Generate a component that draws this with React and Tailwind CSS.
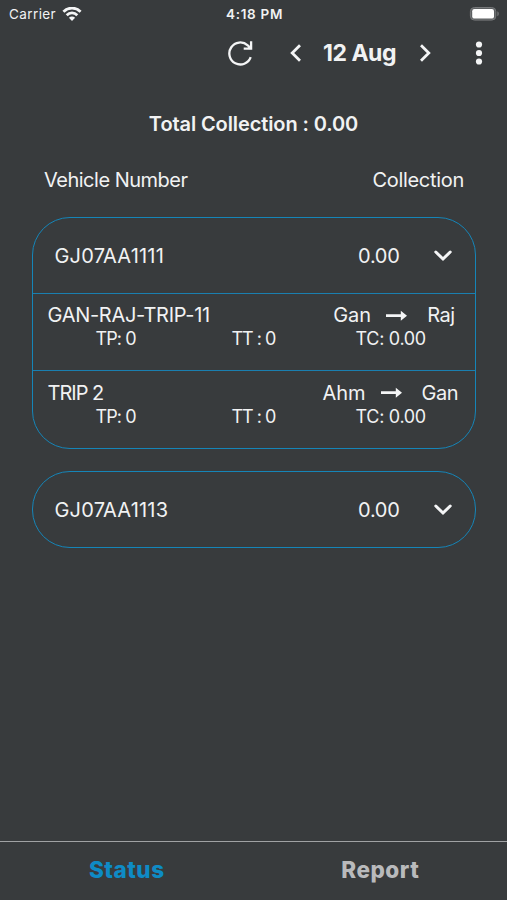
import { useState } from "react";
import clsx from "clsx";

const vehicles = [
  {
    number: "GJ07AA1111",
    collection: "0.00",
    trips: [
      {
        name: "GAN-RAJ-TRIP-11",
        from: "Gan",
        to: "Raj",
        tp: 0,
        tt: 0,
        tc: "0.00",
        inset: "pr-[20px]",
        tracking: "tracking-[-0.3px]",
      },
      {
        name: "TRIP 2",
        from: "Ahm",
        to: "Gan",
        tp: 0,
        tt: 0,
        tc: "0.00",
        inset: "pr-[16.5px]",
        tracking: "tracking-[-1px]",
      },
    ],
  },
  { number: "GJ07AA1113", collection: "0.00", trips: [] },
];

function WifiIcon() {
  return (
    <svg width="20" height="15" viewBox="0 0 20 15" fill="none" stroke="#f4f5f6" strokeWidth="2.8">
      <path d="M1.4 4.700C6.400-.1 13.600-.1 18.600 4.700" />
      <path d="M4.700 8.200c3-3 7.600-3 10.600 0" />
      <path d="M10 13.900 6.900 10.800c1.700-1.700 4.500-1.700 6.200 0z" fill="#f4f5f6" stroke="none" />
    </svg>
  );
}

function BatteryIcon() {
  return (
    <svg width="31" height="15" viewBox="0 0 31 15">
      <rect x="1.400" y=".5" width="25.400" height="12.600" rx="4" fill="#5c5f61" stroke="#77797b" strokeWidth="1" />
      <rect x="3.200" y="2" width="21.800" height="9.600" rx="2.200" fill="#fff" />
      <path d="M28.400 4.300v5c1.800-.8 1.800-4.200 0-5z" fill="#77797b" />
    </svg>
  );
}

function ReloadIcon() {
  return (
    <svg width="26" height="26" viewBox="0 0 26 26" fill="none" stroke="#f4f5f6" strokeWidth="2.300">
      <path d="M23.700 17.200A11 11 0 1 1 20.700 5.300L23.800 8.600" />
      <path d="M24.100 1.300V8.700H16.700" />
      <path d="M24 4.500V9h-4.500z" fill="#f4f5f6" stroke="none" />
    </svg>
  );
}

function Chevron({ d }) {
  return (
    <svg width="12" height="18" viewBox="0 0 12 18" fill="none" stroke="#f4f5f6" strokeWidth="2.800">
      <path d={d} />
    </svg>
  );
}

function ChevronDown() {
  return (
    <svg width="18" height="12" viewBox="0 0 18 12" fill="none" stroke="#f4f5f6" strokeWidth="3">
      <path d="m1.800 2 7.200 7 7.200-7" strokeLinecap="round" />
    </svg>
  );
}

function Arrow() {
  return (
    <svg width="21" height="12" viewBox="0 0 21 12" fill="#f4f5f6">
      <path d="M0 4.300H14.800V.7L21 5.700 14.800 10.700V7.100H0z" />
    </svg>
  );
}

function Trip({ trip }) {
  return (
    <div className="h-[77.5px] border-t border-[#1a7fb0] pt-[10px]">
      <div className={clsx("flex h-[24.5px] items-center pl-[15px] text-[20px] leading-[25px]", trip.inset)}>
        <span className={clsx("flex-1", trip.tracking)}>{trip.name}</span>
        <span className="mr-[15px]">{trip.from}</span>
        <Arrow />
        <span className="ml-[20px] tracking-[-0.5px]">{trip.to}</span>
      </div>
      <div className="flex pl-[63px] text-[18px] leading-[22px]">
        <span className="w-[136px] tracking-[-0.9px]">TP: {trip.tp}</span>
        <span className="w-[124px] tracking-[-1px]">TT : {trip.tt}</span>
        <span className="tracking-[-0.3px]">TC: {trip.tc}</span>
      </div>
    </div>
  );
}

function VehicleCard({ vehicle }) {
  return (
    <section className="mx-[31.5px] mb-[22.5px] overflow-hidden rounded-[38px] border border-[#1585b8]">
      <div className="flex h-[75px] items-center pt-[1px] pr-[23px] pl-[22px] text-[20px]">
        <span className="flex-1 tracking-[0.2px]">{vehicle.number}</span>
        <span className="mr-[34px] tracking-[-0.3px]">{vehicle.collection}</span>
        <ChevronDown />
      </div>
      {vehicle.trips.map((trip) => (
        <Trip key={trip.name} trip={trip} />
      ))}
    </section>
  );
}

export default function App() {
  const [tab, setTab] = useState("Status");

  return (
    <div className="flex h-[900px] w-full flex-col overflow-hidden bg-[#383b3d] font-['Inter',sans-serif] text-[#f1f2f3]">
      <header className="grid h-[28px] grid-cols-3 items-center pr-[7px] pl-[9px] text-[13.5px]">
        <div className="flex items-center gap-[6px]">
          <span className="tracking-[0.4px]">Carrier</span>
          <WifiIcon />
        </div>
        <span className="text-center font-semibold tracking-[0.7px]">4:18 PM</span>
        <div className="flex justify-end">
          <BatteryIcon />
        </div>
      </header>

      <nav className="flex h-[50px] items-center pl-[227px]">
        <button type="button" aria-label="Reload">
          <ReloadIcon />
        </button>
        <button type="button" aria-label="Previous day" className="ml-[36.5px]">
          <Chevron d="M10 1.200 2.200 9 10 16.800" />
        </button>
        <h1 className="ml-[20px] w-[76px] text-center text-[23px] font-bold tracking-[-0.5px] whitespace-nowrap">12 Aug</h1>
        <button type="button" aria-label="Next day" className="ml-[21px]">
          <Chevron d="M2 1.200 9.800 9 2 16.800" />
        </button>
        <button type="button" aria-label="Menu" className="ml-[44.500px]">
          <svg width="8" height="24" viewBox="0 0 8 24" fill="#f4f5f6">
            <circle cx="4" cy="3.500" r="3.100" />
            <circle cx="4" cy="12" r="3.100" />
            <circle cx="4" cy="20.500" r="3.100" />
          </svg>
        </button>
      </nav>

      <main className="flex-1">
        <h2 className="pt-[33px] text-center text-[20px] leading-[26px] font-semibold tracking-[-0.1px]">
          Total Collection : 0.00
        </h2>
        <div className="mt-[30px] mb-[23.5px] flex justify-between pr-[43px] pl-[44px] text-[20px] leading-[26px]">
          <span className="tracking-[-0.5px]">Vehicle Number</span>
          <span className="tracking-[-0.3px]">Collection</span>
        </div>
        {vehicles.map((vehicle) => (
          <VehicleCard key={vehicle.number} vehicle={vehicle} />
        ))}
      </main>

      <footer className="grid h-[59px] grid-cols-2 border-t border-[#a0a2a4] text-[22.5px] font-extrabold">
        {["Status", "Report"].map((name) => (
          <button
            key={name}
            type="button"
            onClick={() => setTab(name)}
            className={clsx("pb-[3px] tracking-[0.5px]", tab === name ? "text-[#0e8bc5]" : "text-[#b9babc]")}
          >
            {name}
          </button>
        ))}
      </footer>
    </div>
  );
}
